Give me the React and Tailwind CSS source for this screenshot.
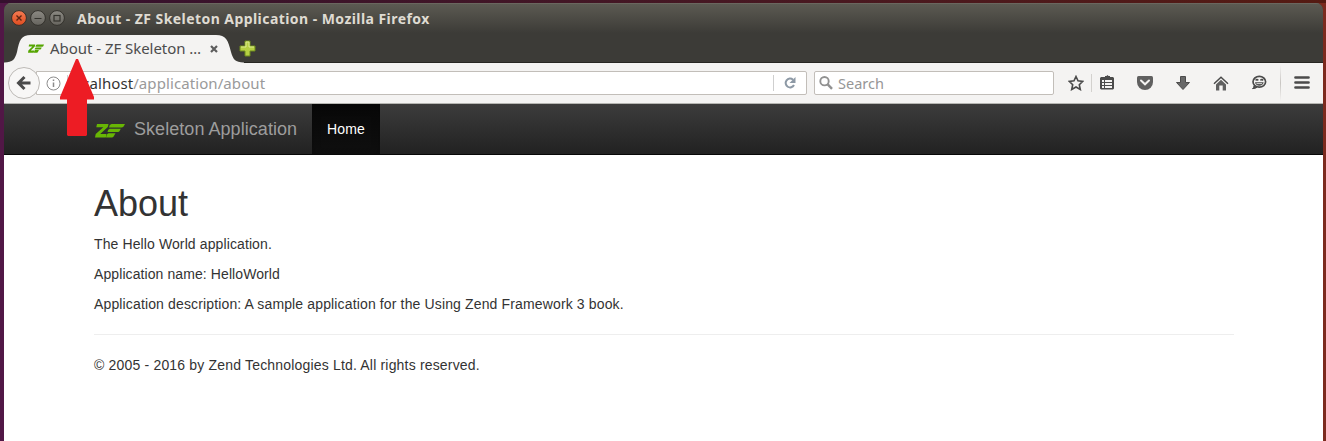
const iconColor = "#4b4b4b";

function ZfLogo({ className, fill }) {
  return (
    <svg className={className} viewBox="0 0 30 15" preserveAspectRatio="none" fill={fill}>
      <path d="M2 1H13.5L12.8 4L5.2 11H11.5L10.8 14.5H0L0.7 11L8.3 4.2H1.3Z" />
      <path d="M16.5 1H30L28.6 3.6Q28 4.4 27 4.4H14Q14.3 1.5 16.5 1Z" />
      <path d="M14.8 5.8H25.8L24.6 8Q24 9 23 9H12.5Q12.8 6.4 14.8 5.8Z" />
      <path d="M13.5 10.2H20.5L18.6 13.5Q18 14.5 16.8 14.5H11Q11.5 10.8 13.5 10.2Z" />
    </svg>
  );
}

function WindowButton({ kind }) {
  const close = kind === "close";
  return (
    <svg className="size-4 shrink-0" viewBox="0 0 16 16">
      <defs>
        <linearGradient id={`btn-${kind}`} x1="0" y1="0" x2="0" y2="1">
          <stop offset="0" stopColor={close ? "#f47b53" : "#8b8983"} />
          <stop offset="1" stopColor={close ? "#df4d20" : "#66645e"} />
        </linearGradient>
      </defs>
      <circle cx="8" cy="8" r="7.4" fill={`url(#btn-${kind})`} stroke="#33312c" />
      {close && <path d="M5.5 5.5L10.5 10.5M10.5 5.5L5.5 10.5" stroke="#5c2412" strokeWidth="1.4" />}
      {kind === "min" && <path d="M4.500 8.500H11.500" stroke="#34332e" strokeWidth="1.2" />}
      {kind === "max" && <rect x="5" y="5.500" width="6" height="5.500" fill="none" stroke="#34332e" strokeWidth="1.2" />}
    </svg>
  );
}

function TitleBar() {
  return (
    <div className="flex h-[31px] items-center pb-px pl-[7px]">
      <div className="flex gap-[3px]">
        <WindowButton kind="close" />
        <WindowButton kind="min" />
        <WindowButton kind="max" />
      </div>
      <span className="ml-3 whitespace-nowrap font-['Noto_Sans',sans-serif] text-[14px] font-bold tracking-[0.44px] text-[#dfdbd2]">
        About - ZF Skeleton Application - Mozilla Firefox
      </span>
    </div>
  );
}

function TabStrip() {
  return (
    <div className="flex h-[29px] items-center border-b border-[#272622]">
      <div className="relative h-[29px] w-[230px]">
        <svg className="absolute left-0 top-0 h-[29px] w-[240px]" viewBox="0 0 240 29">
          <path d="M0 28.500C9 28.500 11 25 13 18C15.500 6 17 1 27 1H212C222 1 224 6 227 18C229 25 231 28.500 240 28.500V29H0Z" fill="#f4f3f2" />
        </svg>
        <div className="relative flex h-[29px] items-center pl-6">
          <ZfLogo className="h-[9px] w-4" fill="#55a500" />
          <span className="ml-1.5 w-[151px] whitespace-nowrap font-['Noto_Sans',sans-serif] text-[15px] tracking-[-0.04px] text-[#4c4c4c]">
            About - ZF Skeleton …
          </span>
          <svg className="ml-[9px] mt-px size-2" viewBox="0 0 8 8">
            <path d="M1 1L7 7M7 1L1 7" stroke="#5d5d5d" strokeWidth="2.2" />
          </svg>
        </div>
      </div>
      <svg className="relative ml-[5px] mt-px size-[17px]" viewBox="0 0 17 17">
        <path d="M6 1H11V6H16V11H11V16H6V11H1V6H6Z" fill="#b6d043" stroke="#6d8b1c" />
        <path d="M7 2H10V7H15M2 7H7V2" fill="none" stroke="#dbea91" />
      </svg>
    </div>
  );
}

function Toolbar() {
  return (
    <div className="flex h-[41px] items-center border-b border-[#b6b6b2] bg-[#f4f3f2]">
      <div className="relative z-10 ml-1 flex size-8 shrink-0 items-center justify-center rounded-full border border-[#bdbab6] bg-[#f8f7f6]">
        <svg className="size-4" viewBox="0 0 16 16" fill="none" stroke={iconColor} strokeWidth="3">
          <path d="M8.500 2L2.500 8L8.500 14M3 8H14.500" />
        </svg>
      </div>
      <div className="-ml-1 flex h-6 w-[771px] shrink-0 items-center rounded-r-[2px] border border-[#c2beb9] bg-white">
        <svg className="ml-[9px] size-[15px] shrink-0" viewBox="0 0 15 15">
          <circle cx="7.500" cy="7.500" r="6.500" fill="none" stroke="#8b8b8b" />
          <path d="M7.500 6.500V11M7.500 3.500V5" stroke="#8b8b8b" strokeWidth="1.500" />
        </svg>
        <div className="ml-1.5 h-4 w-px bg-[#cfcfcf]" />
        <span className="w-[705px] whitespace-nowrap pl-px font-['Noto_Sans',sans-serif] text-[15px] tracking-[0.09px] text-[#9a9a9a]">
          <span className="text-[#333]">localhost</span>/application/about
        </span>
        <div className="h-4 w-px bg-[#cfcfcf]" />
        <svg className="ml-[10px] size-3" viewBox="0 0 12 12">
          <path d="M9 2.700A4.400 4.400 0 1 0 10 8" fill="none" stroke="#8d99a5" strokeWidth="2" />
          <path d="M11.500 0V6H5.500Z" fill="#8d99a5" />
        </svg>
      </div>
      <div className="ml-[7px] flex h-6 w-60 shrink-0 items-center rounded-[2px] border border-[#c2beb9] bg-white pl-1">
        <svg className="size-3.5" viewBox="0 0 14 14" fill="none" stroke="#919191">
          <circle cx="5.500" cy="5.200" r="4.200" strokeWidth="1.900" />
          <path d="M8.500 8.200L13 12.900" strokeWidth="2.400" />
        </svg>
        <span className="ml-[5px] mt-0.5 font-['Noto_Sans',sans-serif] text-[14.5px] text-[#969696]">Search</span>
      </div>
      <div className="ml-3.5 flex items-center">
        <svg className="size-4" viewBox="0 0 16 16">
          <path d="M8 1.500L10 5.800L14.800 6.400L11.300 9.700L12.300 14.500L8 12L3.700 14.500L4.700 9.700L1.200 6.400L6 5.800Z" fill="none" stroke={iconColor} strokeWidth="1.600" />
        </svg>
        <div className="ml-[7px] h-[18px] w-px bg-[#d3d1ce]" />
        <svg className="-mt-px ml-2 size-[15px]" viewBox="0 0 15 15">
          <path d="M5 2V1H6.500L7.500 0L8.500 1H10V2H13L14 3V13.500L13 14.500H1L0 13.500V3L1 2Z" fill={iconColor} />
          <path d="M2 5H4V7H2ZM5 5H12V7H5ZM2 8H4V10H2ZM5 8H12V10H5ZM2 11H4V13H2ZM5 11H12V13H5Z" fill="#f4f3f2" />
        </svg>
        <svg className="ml-[22px] h-3.5 w-4" viewBox="0 0 16 14">
          <path d="M1.500 0H14.500Q16 0 16 1.500V6A8 8 0 0 1 0 6V1.500Q0 0 1.500 0Z" fill="#606060" />
          <path d="M4 4.500L8 8.300L12 4.500" fill="none" stroke="#f4f3f2" strokeWidth="2" strokeLinecap="round" />
        </svg>
        <svg className="ml-[23px] size-3.5" viewBox="0 0 14 14">
          <path d="M4.500 .5H9.500V6.500H13.500L7 13.500L.5 6.500H4.500Z" fill="#686868" stroke="#4c4c4c" />
        </svg>
        <svg className="ml-[23px] h-[15px] w-4" viewBox="0 0 16 15">
          <path d="M1 7.800L8 1.200L15 7.800" fill="none" stroke={iconColor} strokeWidth="1.500" />
          <path d="M3 8.500L8 3.800L13 8.500V14.500H9.700V9.500H6.300V14.500H3Z" fill="#606060" />
        </svg>
        <svg className="-mt-px ml-[22px] h-[15px] w-4" viewBox="0 0 16 15">
          <path d="M3 10.500Q3.200 12.600 1.500 13.600Q4 13.800 6 12.300" fill={iconColor} stroke={iconColor} />
          <ellipse cx="8.300" cy="6.800" rx="6.300" ry="5.400" fill="#f4f3f2" stroke={iconColor} strokeWidth="1.700" />
          <path d="M4 7.300H12.600Q12 10.700 8.300 10.700T4 7.300Z" fill={iconColor} />
          <path d="M5.500 8.600H11.100" stroke="#d5d5d5" />
          <path d="M4.700 5.500Q6 3.500 7.200 5.500M9.500 5.500Q10.800 3.500 12 5.500" fill="none" stroke={iconColor} strokeWidth="1.600" />
        </svg>
        <div className="ml-[13px] h-9 w-px bg-gradient-to-b from-transparent via-[#c8c5c2] to-transparent" />
        <svg className="-mt-px ml-[13px] h-[13px] w-4" viewBox="0 0 16 13">
          <path d="M1.500 1.500H14.500M1.500 6.500H14.500M1.500 11.500H14.500" stroke={iconColor} strokeWidth="2.700" strokeLinecap="round" />
        </svg>
      </div>
    </div>
  );
}

function Page() {
  return (
    <div className="grow bg-white font-['Liberation_Sans',sans-serif] text-[#333]">
      <nav className="flex h-[51px] items-stretch border-b border-[#080808] bg-gradient-to-b from-[#3c3c3c] to-[#222] pl-[90px]">
        <a className="flex items-center whitespace-nowrap text-[18px] text-[#9d9d9d]">
          <ZfLogo className="ml-px mt-0.5 h-[15px] w-[30px]" fill="#68b604" />
          <span className="ml-[9px] w-[178px] tracking-[0.05px]">Skeleton Application</span>
        </a>
        <a className="flex w-[68px] items-center justify-center bg-gradient-to-b from-[#080808] to-[#0f0f0f] text-[14px] tracking-[0.14px] text-white shadow-[inset_0_3px_9px_rgba(0,0,0,0.25)]">
          Home
        </a>
      </nav>
      <main className="ml-[90px] w-[1140px] pt-[29px] text-[14px] leading-5 tracking-[0.14px]">
        <h1 className="mb-2.5 text-[36px] leading-10 tracking-normal">About</h1>
        <p className="mb-2.5 tracking-[0.11px]">The Hello World application.</p>
        <p className="mb-2.5 tracking-[0.09px]">Application name: HelloWorld</p>
        <p>Application description: A sample application for the Using Zend Framework 3 book.</p>
        <hr className="my-5 border-[#eee]" />
        <p className="tracking-[0.18px]">© 2005 - 2016 by Zend Technologies Ltd. All rights reserved.</p>
      </main>
    </div>
  );
}

export default function App() {
  return (
    <div className="relative h-[441px] w-[1326px] overflow-hidden bg-gradient-to-r from-[#511746] via-[#46152b] to-[#7c2a1e] pl-1 pr-[3px] pt-[3px]">
      <div className="absolute inset-x-0 top-0 h-[3px] bg-gradient-to-r from-[#35102e] to-[#551b12]" />
      <div className="relative flex h-[438px] flex-col overflow-hidden rounded-t-[7px] bg-[#3c3b37]">
        <div className="bg-[linear-gradient(#5d5b53,#3c3b37_30px)] shadow-[inset_0_1px_0_#6a675f]">
          <TitleBar />
          <TabStrip />
        </div>
        <Toolbar />
        <Page />
      </div>
      <svg className="absolute left-[60px] top-[59px] h-[77px] w-[34px]" viewBox="0 0 34 77">
        <path d="M16 0H18L34 38V40.500H27V76L26 77H8L7 76V40.500H0V38Z" fill="#ed1c24" />
      </svg>
    </div>
  );
}
